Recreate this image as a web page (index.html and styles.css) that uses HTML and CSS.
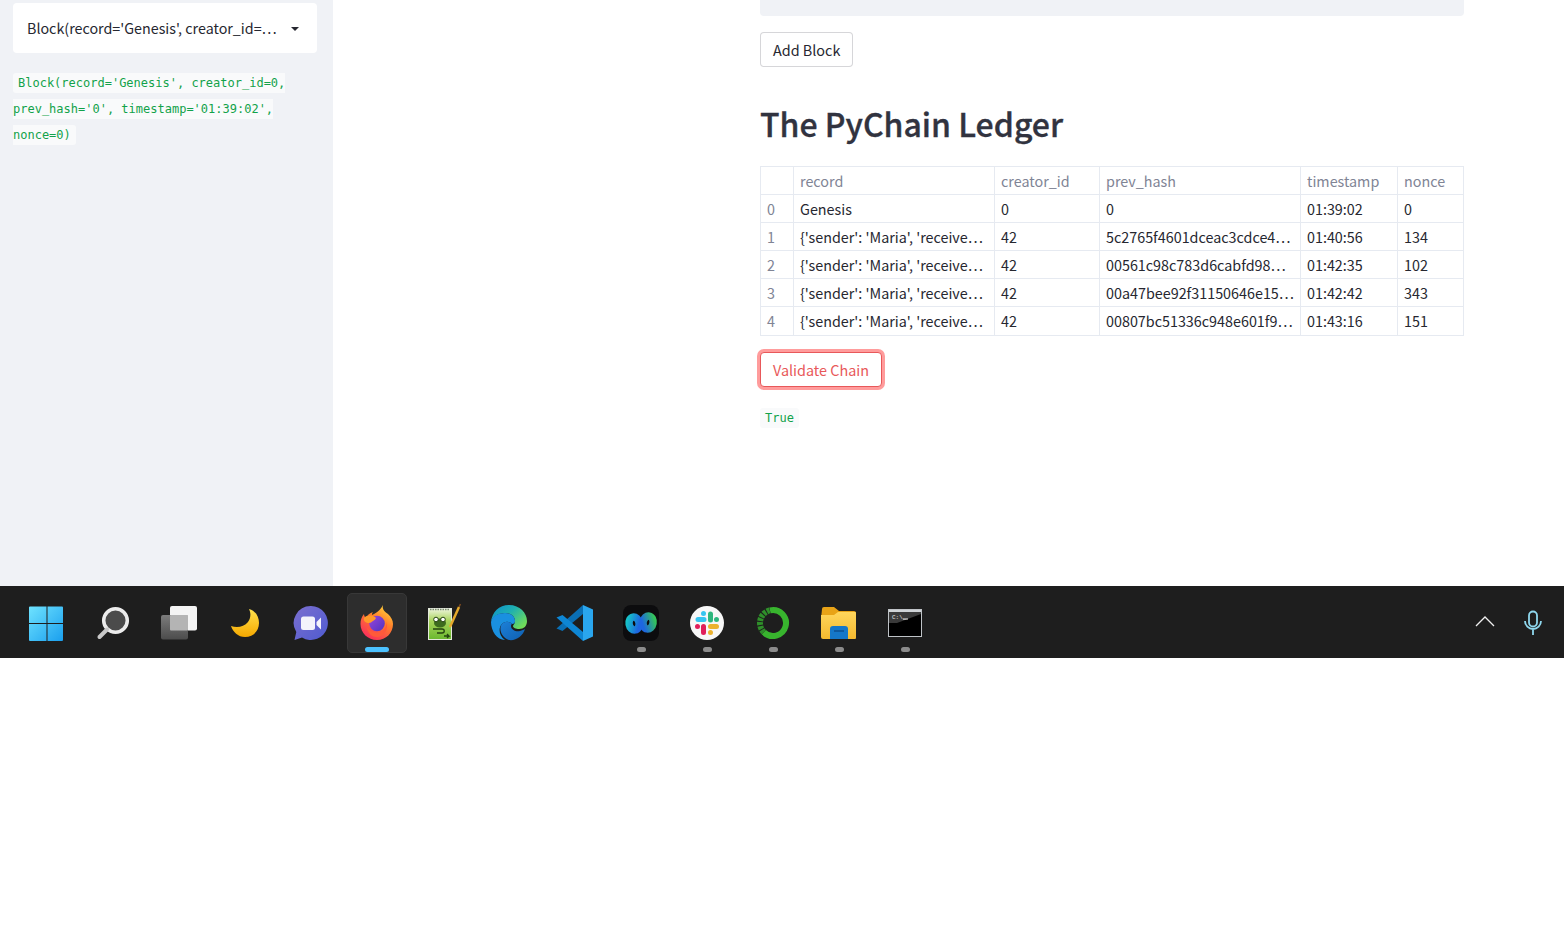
FILE: index.html
```html
<!DOCTYPE html>
<html lang="en">
<head>
<meta charset="utf-8">
<title>PyChain</title>
<link rel="stylesheet" href="styles.css">
</head>
<body>
<div class="app">
  <aside class="sidebar">
    <div class="select">
      <span class="select-value">Block(record='Genesis', creator_id=…</span>
      <svg class="caret" width="10" height="6" viewBox="0 0 10 6"><path d="M1 1h8L5 5z" fill="#262730"/></svg>
    </div>
    <p class="code-para"><code class="code">Block(record='Genesis', creator_id=0, prev_hash='0', timestamp='01:39:02', nonce=0)</code></p>
  </aside>
  <main class="main">
    <div class="content">
      <div class="input-end"></div>
      <button class="btn btn-add">Add Block</button>
      <h1 class="title">The PyChain Ledger</h1>
      <table class="ledger">
        <colgroup>
          <col class="c0"><col class="c1"><col class="c2"><col class="c3"><col class="c4"><col class="c5">
        </colgroup>
        <thead>
          <tr><th></th><th>record</th><th>creator_id</th><th>prev_hash</th><th>timestamp</th><th>nonce</th></tr>
        </thead>
        <tbody>
          <tr><th>0</th><td>Genesis</td><td>0</td><td>0</td><td>01:39:02</td><td>0</td></tr>
          <tr><th>1</th><td>{'sender': 'Maria', 'receive…</td><td>42</td><td>5c2765f4601dceac3cdce4…</td><td>01:40:56</td><td>134</td></tr>
          <tr><th>2</th><td>{'sender': 'Maria', 'receive…</td><td>42</td><td>00561c98c783d6cabfd98…</td><td>01:42:35</td><td>102</td></tr>
          <tr><th>3</th><td>{'sender': 'Maria', 'receive…</td><td>42</td><td>00a47bee92f31150646e15…</td><td>01:42:42</td><td>343</td></tr>
          <tr class="row-last"><th>4</th><td>{'sender': 'Maria', 'receive…</td><td>42</td><td>00807bc51336c948e601f9…</td><td>01:43:16</td><td>151</td></tr>
        </tbody>
      </table>
      <button class="btn btn-validate">Validate Chain</button>
      <p class="result"><code class="code">True</code></p>
    </div>
  </main>
</div>

<footer class="taskbar">
  <div class="tb-icons">
    <div class="tb-item">
      <svg width="40" height="40" viewBox="1 0 40 40"><defs><linearGradient id="win" x1="0" y1="0" x2="1" y2="1"><stop offset="0" stop-color="#6fe3ff"/><stop offset="1" stop-color="#1a9fee"/></linearGradient></defs><path fill="url(#win)" d="M4 3.500h16.500V20H3V4.500a1 1 0 0 1 1-1zM21.500 3.500H36a1 1 0 0 1 1 1V20H21.500zM3 21h17.500v17H4a1 1 0 0 1-1-1zM21.500 21H37v16a1 1 0 0 1-1 1H21.500z"/></svg>
    </div>
    <div class="tb-item">
      <svg width="40" height="40" viewBox="0 0 40 40"><circle cx="22.500" cy="17.500" r="11.800" fill="#4b4b4b" stroke="#ececec" stroke-width="3.500"/><path d="M14 26.500l-7.500 7.500" stroke="#c9c9c9" stroke-width="4" stroke-linecap="round"/></svg>
    </div>
    <div class="tb-item">
      <svg width="40" height="40" viewBox="0 0 40 40"><defs><linearGradient id="tv" x1="0" y1="0" x2="0" y2="1"><stop offset="0" stop-color="#7c7c7c"/><stop offset="1" stop-color="#4c4c4c"/></linearGradient></defs><rect x="11" y="3" width="27" height="24.500" rx="2" fill="#f4f4f4"/><rect x="2" y="12" width="27" height="24.500" rx="2" fill="url(#tv)"/><rect x="11" y="12" width="18" height="15.500" rx="1" fill="#b4b4b4"/></svg>
    </div>
    <div class="tb-item">
      <svg width="40" height="40" viewBox="0 0 40 40"><defs><linearGradient id="moon" x1="0" y1="0" x2="0" y2="1"><stop offset="0" stop-color="#ffe14d"/><stop offset="1" stop-color="#f5a800"/></linearGradient></defs><path fill="url(#moon)" d="M24 6C31 8 34 14 34 20C34 28 28 34 20 34C13 34 8 29 6 23C12 25 19 24 23 19C26 15 26 10 24 6z"/></svg>
    </div>
    <div class="tb-item">
      <svg width="40" height="40" viewBox="0 0 40 40"><defs><linearGradient id="meet" x1="0" y1="0" x2="1" y2="1"><stop offset="0" stop-color="#7b6fd0"/><stop offset="1" stop-color="#4f5bd0"/></linearGradient></defs><path fill="url(#meet)" d="M20 3a17 17 0 1 1-9 31.500L3.500 37l1.800-8A17 17 0 0 1 20 3z"/><rect x="10" y="13.500" width="14" height="13.500" rx="2.500" fill="#f3f3fb"/><path d="M25.500 19l4.500-4.500v12L25.500 22z" fill="#f3f3fb"/></svg>
    </div>
    <div class="tb-item tb-active">
      <svg width="40" height="40" viewBox="0 0 40 40"><defs><linearGradient id="fx1" x1="0.800" y1="0" x2="0.200" y2="1"><stop offset="0" stop-color="#ffd93b"/><stop offset="0.400" stop-color="#ff7f2b"/><stop offset="1" stop-color="#f9275f"/></linearGradient><linearGradient id="fx2" x1="0" y1="0" x2="1" y2="1"><stop offset="0" stop-color="#9a45dc"/><stop offset="1" stop-color="#4d34c0"/></linearGradient></defs><path fill="url(#fx1)" d="M26 2c-1 4 1 6 5 9 3 3 5 6 5 10 0 9-7 16-16 16S3.500 30 3.500 21c0-4 1-7 3.500-10 0 2 1 3 2 4 1-3 4-5 7-6-1 1-1 2-1 3 4-2 8-4 11-10z"/><circle cx="20" cy="20.500" r="7.800" fill="url(#fx2)"/><path fill="#ff9a2a" d="M7 15c3-3 7-3 11-1 2 1 0 3-2 4-2 1-2 2-4 2-3 0-6-2-5-5z"/><path fill="#ff5a3a" d="M10 24c3 5 10 7 15 4 3-2 5-5 4-9 3 6-1 14-8 15-6 1-11-5-11-10z"/></svg>
      <span class="dot dot-blue"></span>
    </div>
    <div class="tb-item">
      <svg width="40" height="40" viewBox="0 0 40 40"><defs><linearGradient id="npp" x1="0" y1="0" x2="0" y2="1"><stop offset="0" stop-color="#f0f5e0"/><stop offset="0.400" stop-color="#a8d45a"/><stop offset="1" stop-color="#6ab82e"/></linearGradient></defs><rect x="5.500" y="5.500" width="23" height="31" fill="url(#npp)" stroke="#e4e8dc"/><path d="M7 6.500h20" stroke="#7a8a70" stroke-width="1.500" stroke-dasharray="1.500 1"/><ellipse cx="17" cy="20" rx="6" ry="4.500" fill="#3d6b1e"/><circle cx="13" cy="16.500" r="2.300" fill="#fff" stroke="#24420f"/><circle cx="20" cy="16.500" r="2.300" fill="#fff" stroke="#24420f"/><path d="M10 26h9c3 0 3 4 0 4h-5M21 33h5l-2-2m2 2l-2 2" fill="none" stroke="#24420f" stroke-width="1.300"/><path d="M27 24L36 4" stroke="#e4a92b" stroke-width="2.500"/><path d="M36 4l1.500-3" stroke="#7a4a20" stroke-width="1.500"/></svg>
    </div>
    <div class="tb-item">
      <svg width="40" height="40" viewBox="0 0 40 40"><defs><linearGradient id="ed1" x1="0" y1="0" x2="1" y2="0.700"><stop offset="0" stop-color="#0c8fd0"/><stop offset="0.500" stop-color="#1fb0b0"/><stop offset="1" stop-color="#6fdc5a"/></linearGradient><linearGradient id="ed2" x1="0" y1="0" x2="1" y2="1"><stop offset="0" stop-color="#1c80d8"/><stop offset="1" stop-color="#0f5fb0"/></linearGradient></defs><path fill="url(#ed1)" d="M20 2c11 0 18 8 18 16 0 5-3 8-8 8-3 0-6-1-6-3 0-1 2-2 2-5 0-5-5-8-10-8C9 10 3 14 2 19 3 9 10 2 20 2z"/><path fill="#1a90e0" d="M2 19c1-6 7-9 14-9 5 0 10 3 10 8 0 2-1 3-3 3-3-3-7-3-10 0-4 4-3 12 3 16-8 0-14-9-14-18z"/><path fill="url(#ed2)" d="M13 21c3-3 7-3 10 0-1 1-1 1-1 2 0 4 5 6 9 5 2-1 4-1 5-2-2 7-9 12-16 11-7-2-11-11-7-16z"/></svg>
    </div>
    <div class="tb-item">
      <svg width="40" height="40" viewBox="0 0 40 40"><path fill="#2aa6ee" d="M28 2l10 4.500v27L28 38z"/><path fill="#0a6fb5" d="M28 2v9L7.500 28l-6-2.500z"/><path fill="#0e86d4" d="M28 38v-9L7.500 12l-6 2.500z"/></svg>
    </div>
    <div class="tb-item">
      <svg width="40" height="40" viewBox="0 0 40 40"><defs><linearGradient id="wx" x1="0" y1="0" x2="1" y2="0.600"><stop offset="0" stop-color="#16c0c8"/><stop offset="1" stop-color="#1d66e0"/></linearGradient><linearGradient id="wx2" x1="0" y1="0.700" x2="1" y2="0"><stop offset="0" stop-color="#1d66e0"/><stop offset="1" stop-color="#34c45a"/></linearGradient></defs><rect x="2" y="2" width="36" height="36" rx="8" fill="#0c0c0e"/><ellipse cx="27" cy="19.500" rx="5" ry="6.500" fill="none" stroke="url(#wx2)" stroke-width="7.500" transform="rotate(10 27 20)"/><ellipse cx="13" cy="20.500" rx="5" ry="6.500" fill="none" stroke="url(#wx)" stroke-width="7.500" transform="rotate(-10 13 20)"/></svg>
      <span class="dot"></span>
    </div>
    <div class="tb-item">
      <svg width="40" height="40" viewBox="0 0 40 40"><circle cx="20" cy="20" r="17" fill="#f7f7f7"/><g stroke-width="5" stroke-linecap="round" fill="none"><path d="M11 16.500h6M16.500 10.500h0" stroke="#36c5f0"/><path d="M23.500 11v6M29.500 16.500h0" stroke="#2eb67d"/><path d="M23.500 23.500h6M23.500 29.500h0" stroke="#ecb22e"/><path d="M16.500 23.500v6M10.500 23.500h0" stroke="#e01e5a"/></g></svg>
      <span class="dot"></span>
    </div>
    <div class="tb-item">
      <svg width="40" height="40" viewBox="0 0 40 40"><path d="M17 7.350A13 13 0 1 1 10.800 29.200" fill="none" stroke="#38b52e" stroke-width="6"/><path d="M10.800 29.200A13 13 0 0 1 17 7.350" fill="none" stroke="#2f8f2a" stroke-width="6" stroke-dasharray="3 1"/></svg>
      <span class="dot"></span>
    </div>
    <div class="tb-item">
      <svg width="40" height="40" viewBox="0 0 40 40"><defs><linearGradient id="fd" x1="0" y1="0" x2="0" y2="1"><stop offset="0" stop-color="#ffd65c"/><stop offset="1" stop-color="#f4b92f"/></linearGradient></defs><path fill="#e8a317" d="M3 6a2 2 0 0 1 2-2h10l5 4h15a2 2 0 0 1 2 2v6H2z"/><path fill="url(#fd)" d="M2 12h13l4-3h17a1 1 0 0 1 1 1v25a1 1 0 0 1-1 1H4a2 2 0 0 1-2-2z"/><path fill="#1577c9" d="M11 26a3 3 0 0 1 3-3h12a3 3 0 0 1 3 3v10H11z"/><path d="M15 28h10" stroke="#0c4f90" stroke-width="1.500"/></svg>
      <span class="dot"></span>
    </div>
    <div class="tb-item">
      <svg width="40" height="40" viewBox="0 0 40 40"><rect x="3.500" y="6.500" width="33" height="27" fill="#000" stroke="#bfc3c7"/><rect x="4" y="7" width="32" height="2" fill="#cfd3d6"/><path d="M4 9h32v2L12 20H4z" fill="#3a3a3a"/><text x="7" y="15.500" class="term-text">C:\_</text><path d="M18 16h5" stroke="#eee" stroke-width="1"/></svg>
      <span class="dot"></span>
    </div>
  </div>
  <div class="tb-tray">
    <svg class="chevron" width="20" height="12" viewBox="0 0 20 12"><path d="M1 11l9-9 9 9" fill="none" stroke="#f0f0f0" stroke-width="1.300"/></svg>
    <svg width="20" height="26" viewBox="0 0 20 26"><rect x="6" y="1.500" width="8" height="15" rx="4" fill="none" stroke="#8fd8ee" stroke-width="1.800"/><path d="M2 11a8 8 0 0 0 16 0M10 19v6" fill="none" stroke="#8fd8ee" stroke-width="1.800"/></svg>
  </div>
</footer>
</body>
</html>
```

FILE: styles.css
```css
*, *::before { box-sizing: border-box; }

html, body {
  margin: 0;
  padding: 0;
  background: #fff;
}

body {
  font-family: "Noto Sans CJK SC", "Noto Sans", sans-serif;
  color: #262730;
}

.app {
  display: flex;
  height: 586px;
  overflow: hidden;
}

.sidebar {
  width: 333px;
  flex: none;
  background: #f0f2f6;
  padding: 3px 16px 0 13px;
}

.select {
  display: flex;
  align-items: center;
  height: 50px;
  background: #fff;
  border-radius: 4px;
  padding: 0 17px 2px 14px;
}

.select-value {
  flex: 1;
  min-width: 0;
  white-space: nowrap;
  font-size: 14.300px;
}

.caret {
  flex: none;
  margin-top: 4px;
}

.code-para {
  margin: 17px 0 0;
  line-height: 26px;
  font-family: "DejaVu Sans Mono", monospace;
  font-size: 12px;
}

.code {
  font-family: "DejaVu Sans Mono", monospace;
  font-size: 12px;
  color: #12a24a;
  background: #f9fafb;
  border-radius: 3px;
  padding: 3px 5px;
}

.main {
  flex: 1;
  min-width: 0;
  padding-left: 427px;
}

.content {
  width: 704px;
}

.input-end {
  height: 16px;
  background: #f0f2f6;
  border-radius: 0 0 4px 4px;
}

.btn {
  display: block;
  font-family: inherit;
  font-size: 14.400px;
  height: 35px;
  padding: 0 12px;
  background: #fff;
  color: #262730;
  border: 1px solid rgba(49, 51, 63, 0.2);
  border-radius: 4px;
}

.btn-add {
  margin-top: 16px;
}

.title {
  margin: 34px 0 0;
  font-size: 32px;
  line-height: 44px;
  font-weight: 500;
  -webkit-text-stroke: 0.35px #31333f;
  color: #31333f;
}

.ledger {
  margin-top: 21px;
  width: 704px;
  table-layout: fixed;
  border-collapse: collapse;
  font-size: 14.350px;
}

.c0 { width: 33px; }
.c1 { width: 201px; }
.c2 { width: 105px; }
.c3 { width: 201px; }
.c4 { width: 97px; }
.c5 { width: 66px; }

.ledger th,
.ledger td {
  height: 28px;
  padding: 0 6px;
  border: 1px solid #e6eaf1;
  font-weight: 400;
  text-align: left;
  white-space: nowrap;
  overflow: hidden;
  line-height: 20px;
}

.ledger .row-last th,
.ledger .row-last td {
  height: 29px;
}

.ledger th { color: #808495; }
.ledger td { color: #262730; }

.btn-validate {
  margin-top: 16px;
  color: #e8585a;
  border: 1px solid #e8585a;
  box-shadow: 0 0 0 3px rgba(255, 75, 75, 0.55);
}

.result {
  margin: 21px 0 0;
  line-height: 20px;
  font-family: "DejaVu Sans Mono", monospace;
  font-size: 12px;
}

.taskbar {
  display: flex;
  justify-content: space-between;
  align-items: center;
  height: 72px;
  padding: 2px 21px 0 14px;
  background: #1e1e1e;
}

.tb-icons { display: flex; }

.tb-item {
  position: relative;
  width: 66px;
  height: 60px;
  display: flex;
  align-items: center;
  justify-content: center;
}

.tb-active::before {
  content: "";
  position: absolute;
  left: 3px;
  top: 0;
  width: 60px;
  height: 60px;
  background: #2d2d2d;
  border: 1px solid #383838;
  border-radius: 5px;
}

.tb-item svg { position: relative; }

.dot {
  position: absolute;
  left: 29px;
  top: 54px;
  width: 9px;
  height: 5px;
  border-radius: 2.500px;
  background: #8c8c8c;
}

.dot-blue {
  left: 21px;
  width: 24px;
  background: #4cc2ff;
}

.term-text {
  font-family: "Liberation Mono", monospace;
  font-size: 6px;
  fill: #e6e6e6;
}

.tb-tray {
  display: flex;
  align-items: center;
  gap: 28px;
}

.chevron { margin-bottom: 4px; }
```
